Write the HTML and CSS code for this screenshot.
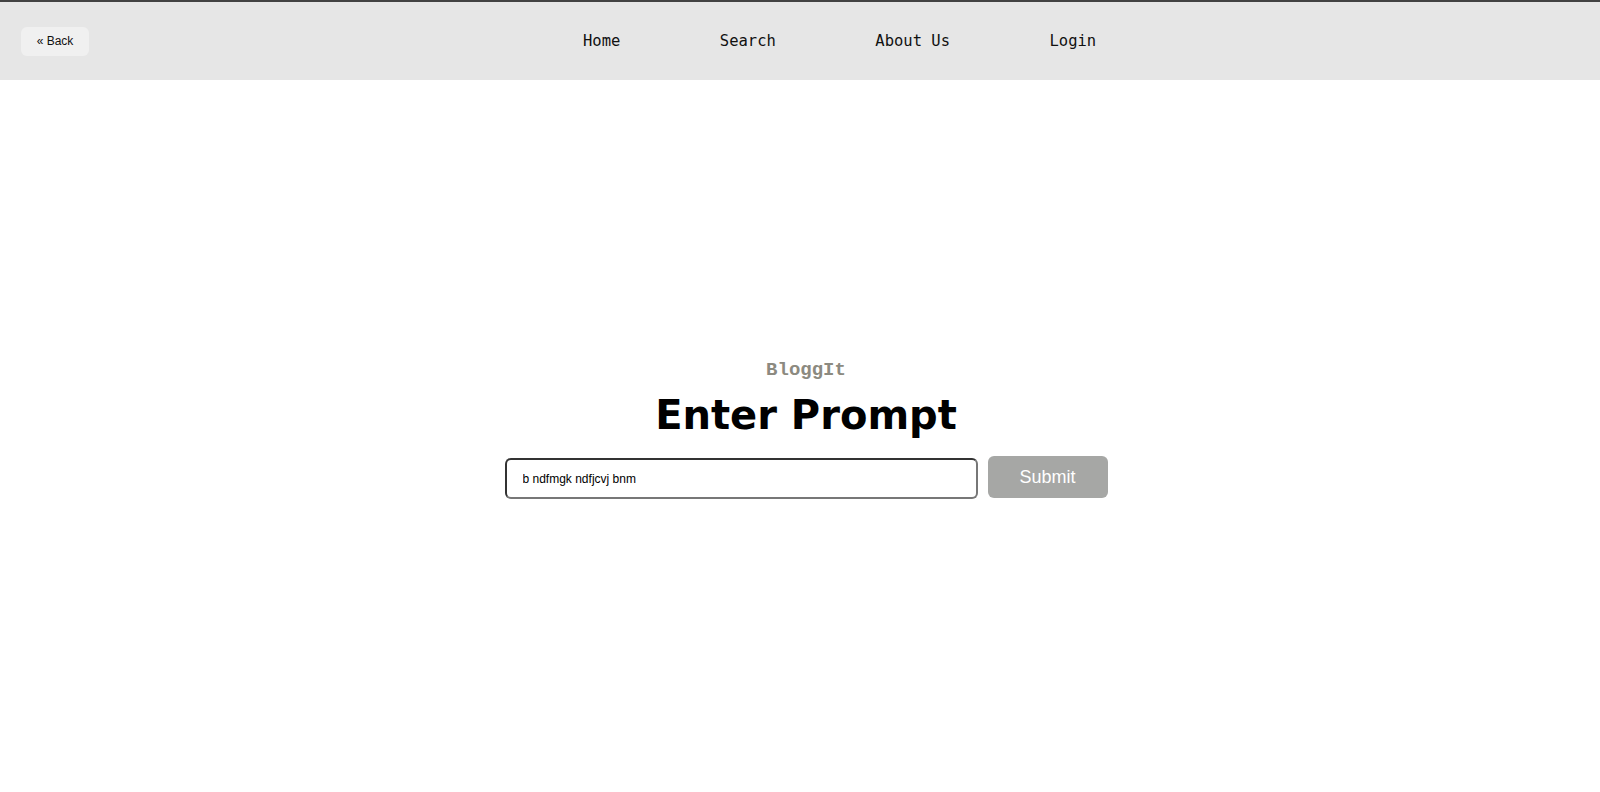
FILE: index.html
```html
<!DOCTYPE html>
<html lang="en">
<head>
<meta charset="utf-8">
<title>BloggIt - Enter Prompt</title>
<link rel="stylesheet" href="styles.css">
</head>
<body>
<header class="topbar">
  <button class="back-btn" type="button">« Back</button>
  <nav class="nav">
    <a class="nav-link" href="#">Home</a>
    <a class="nav-link" href="#">Search</a>
    <a class="nav-link" href="#">About Us</a>
    <a class="nav-link" href="#">Login</a>
  </nav>
</header>
<main class="main">
  <div class="brand">BloggIt</div>
  <h1 class="title">Enter Prompt</h1>
  <form class="prompt-form">
    <input class="prompt-input" type="text" value="b ndfmgk ndfjcvj bnm">
    <button class="submit-btn" type="button">Submit</button>
  </form>
</main>
</body>
</html>
```

FILE: styles.css
```css
html, body {
  margin: 0;
  padding: 0;
  background: #ffffff;
}
body {
  font-family: "Liberation Sans", Arial, sans-serif;
  width: 1600px;
  height: 792px;
  overflow: hidden;
}
.topbar {
  box-sizing: border-box;
  height: 80px;
  border-top: 2px solid #424242;
  background: #e6e6e6;
  display: flex;
  align-items: center;
  padding-left: 21px;
}
.back-btn {
  box-sizing: border-box;
  width: 68px;
  height: 29px;
  border: none;
  border-radius: 6px;
  background: #f0f0f0;
  font-family: "Liberation Sans", Arial, sans-serif;
  font-size: 12px;
  color: #111;
  padding: 0;
}
.nav {
  display: flex;
  gap: 99.5px;
  margin-left: 494px;
}
.nav-link {
  font-family: "DejaVu Sans Mono", "Liberation Mono", monospace;
  font-size: 15.5px;
  color: #111;
  text-decoration: none;
}
.main {
  display: flex;
  flex-direction: column;
  align-items: center;
  padding-top: 278px;
  padding-left: 12px;
}
.brand {
  font-family: "Liberation Mono", "DejaVu Sans Mono", monospace;
  font-weight: bold;
  font-size: 19px;
  line-height: 24px;
  color: #8c8a80;
}
.title {
  margin: 8px 0 0;
  font-family: "DejaVu Sans", Verdana, sans-serif;
  font-weight: bold;
  font-size: 40px;
  line-height: 50px;
  color: #000;
}
.prompt-form {
  display: flex;
  align-items: center;
  gap: 10px;
  margin-top: 18px;
}
.prompt-input {
  box-sizing: border-box;
  width: 473px;
  height: 41px;
  border: 2px solid #333;
  border-right-color: #777;
  border-bottom-color: #777;
  border-radius: 6px;
  padding: 0 16px;
  font-family: "Liberation Sans", Arial, sans-serif;
  font-size: 12px;
  color: #000;
  outline: none;
}
.submit-btn {
  box-sizing: border-box;
  width: 120px;
  height: 42px;
  border: none;
  border-radius: 6px;
  background: #a6a7a5;
  color: #fff;
  font-family: "Liberation Sans", Arial, sans-serif;
  font-size: 18px;
  margin-top: -3px;
}
```
